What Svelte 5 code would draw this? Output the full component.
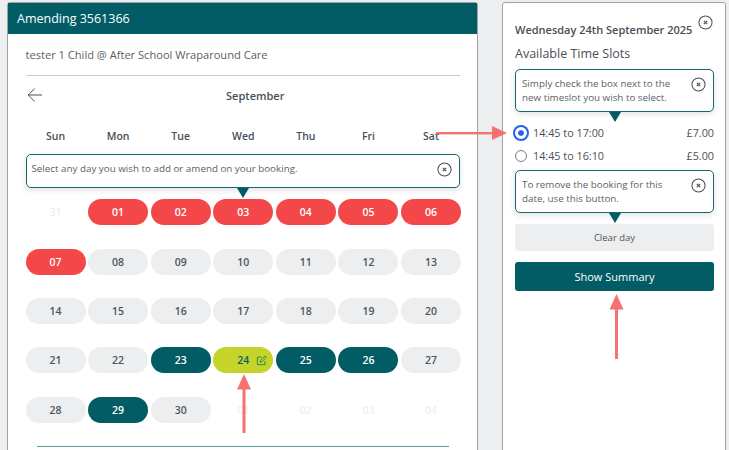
<script>
  const weekdays = ['Sun', 'Mon', 'Tue', 'Wed', 'Thu', 'Fri', 'Sat'];
  const pad = (n) => String(n).padStart(2, '0');

  const booked = [23, 25, 26, 29];
  const days = [{ label: '31', kind: 'off' }];
  for (let d = 1; d <= 30; d++) {
    let kind = 'free';
    if (d <= 7) kind = 'closed';
    if (booked.includes(d)) kind = 'booked';
    if (d === 24) kind = 'selected';
    days.push({ label: pad(d), kind });
  }
  for (let d = 1; d <= 4; d++) days.push({ label: pad(d), kind: 'off' });

  let slot = '1700';
</script>

{#snippet closeIcon()}
  <svg class="close" viewBox="0 0 16 16" width="15" height="15">
    <circle cx="8" cy="8" r="7" fill="none" stroke="#4a4f55" stroke-width="1.1" />
    <path d="M6.2 6.2l3.6 3.6M9.8 6.2l-3.6 3.6" stroke="#4a4f55" stroke-width="1.3" />
  </svg>
{/snippet}

<div class="page">
  <section class="card left">
    <header>Amending 3561366</header>
    <div class="body">
      <p class="title">tester 1 Child @ After School Wraparound Care</p>
      <div class="month">
        <svg class="back" viewBox="0 0 16 16" width="16" height="16">
          <path d="M15 8H1.2M7.6 1.6L1.2 8l6.4 6.4" fill="none" stroke="#4a4f55" stroke-width="1" />
        </svg>
        <span>September</span>
      </div>
      <div class="weekdays">
        {#each weekdays as w}
          <span>{w}</span>
        {/each}
      </div>
      <div class="tip tip-wide">
        <span>Select any day you wish to add or amend on your booking.</span>
        {@render closeIcon()}
      </div>
      <div class="grid">
        {#each days as day}
          <div class="day {day.kind}">
            {day.label}
            {#if day.kind === 'selected'}
              <svg class="edit" viewBox="0 0 16 16" width="11" height="11">
                <path d="M13 9v5H2V3h6" fill="none" stroke="#1f7a5c" stroke-width="1.3" />
                <path d="M6 10.4l.6-2.6L13 1.4l2 2-6.4 6.4z" fill="none" stroke="#1f7a5c" stroke-width="1.3" />
              </svg>
            {/if}
          </div>
        {/each}
      </div>
      <hr />
    </div>
  </section>

  <section class="card right">
    <div class="date-row">
      <strong>Wednesday 24th September 2025</strong>
      {@render closeIcon()}
    </div>
    <h2>Available Time Slots</h2>
    <div class="tip tip-slots">
      <span>Simply check the box next to the new timeslot you wish to select.</span>
      {@render closeIcon()}
    </div>
    <label class="slot first">
      <input type="radio" name="slot" value="1700" bind:group={slot} />
      <span>14:45 to 17:00</span>
      <em>£7.00</em>
    </label>
    <label class="slot">
      <input type="radio" name="slot" value="1610" bind:group={slot} />
      <span>14:45 to 16:10</span>
      <em>£5.00</em>
    </label>
    <div class="tip tip-clear">
      <span>To remove the booking for this date, use this button.</span>
      {@render closeIcon()}
    </div>
    <button class="clear">Clear day</button>
    <button class="summary">Show Summary</button>
  </section>

  <!-- annotation arrows drawn on top of the screenshot -->
  <svg class="arrows" viewBox="0 0 729 450" width="729" height="450">
    <g fill="#f87171" stroke="none">
      <rect x="436" y="132" width="58" height="2.4" />
      <path d="M507 133l-15 -7v14z" />
      <rect x="242.5" y="386" width="3" height="47" />
      <path d="M244 374l-7 15.5h14z" />
      <rect x="615" y="307" width="3" height="52" />
      <path d="M616.500 294l-7 15.500h14z" />
    </g>
  </svg>
</div>

<style>
  :global(body) {
    margin: 0;
    background: #eceef0;
    overflow: hidden;
  }

  .page {
    position: relative;
    display: flex;
    align-items: flex-start;
    gap: 24px;
    width: 729px;
    height: 450px;
    padding: 2px 0 0 7px;
    box-sizing: border-box;
    overflow: hidden;
    font-family: "Open Sans", "Noto Sans", sans-serif;
    color: #4a4f55;
  }

  .card {
    box-sizing: border-box;
    height: 470px;
    background: #fff;
    border: 1px solid #9fa3a8;
    border-radius: 3px 3px 0 0;
  }

  .left {
    width: 471px;
    flex: none;
  }

  .left header {
    height: 31px;
    line-height: 31px;
    padding-left: 9px;
    background: #015c66;
    color: #fff;
    font-size: 12.5px;
  }

  .body {
    position: relative;
    padding: 0 17px 0 17.5px;
  }

  .title {
    margin: 0;
    height: 41px;
    line-height: 41px;
    font-size: 11.1px;
    border-bottom: 1px solid #bcd0d2;
    color: #5a5f64;
  }

  .month {
    position: relative;
    height: 39px;
    display: flex;
    align-items: center;
    justify-content: center;
    padding-left: 25px;
    font-size: 11px;
    font-weight: 600;
  }

  .back {
    position: absolute;
    left: 1px;
    top: 11px;
  }

  .weekdays {
    display: grid;
    grid-template-columns: repeat(7, 60px);
    column-gap: 2.6px;
    margin-top: 14px;
    text-align: center;
    font-size: 10.5px;
    font-weight: 600;
    line-height: 14px;
    height: 14px;
  }

  .tip {
    position: absolute;
    box-sizing: border-box;
    display: flex;
    justify-content: space-between;
    background: #fff;
    border: 1px solid #15686f;
    border-radius: 5px;
    box-shadow: 0 2px 6px rgba(0, 0, 0, 0.12);
    font-size: 9.8px;
    line-height: 14.3px;
    color: #5a5f64;
    z-index: 1;
  }

  .tip::after {
    content: "";
    position: absolute;
    left: 50%;
    bottom: -11px;
    margin-left: -5.5px;
    border-left: 6.5px solid transparent;
    border-right: 6.5px solid transparent;
    border-top: 10px solid #015c66;
  }

  .tip-wide {
    left: 17.5px;
    right: 17px;
    top: 120px;
    height: 34px;
    align-items: center;
    padding: 0 7px 3px 5px;
  }

  .tip-slots {
    left: 12px;
    top: 66px;
    width: 199px;
    height: 43px;
    padding: 7px 7px 0 6px;
  }

  .tip-clear {
    left: 12px;
    top: 167px;
    width: 199px;
    height: 43px;
    padding: 7px 7px 0 6px;
  }

  .tip-slots span,
  .tip-clear span {
    width: 165px;
  }

  .grid {
    display: grid;
    grid-template-columns: repeat(7, 60px);
    column-gap: 2.6px;
    row-gap: 23.4px;
    margin-top: 56.3px;
  }

  .day {
    display: flex;
    align-items: center;
    justify-content: center;
    position: relative;
    height: 26px;
    border-radius: 13px;
    font-size: 10.5px;
    font-weight: 600;
  }

  .free {
    background: #eceef0;
    color: #4f545a;
  }

  .closed {
    background: #f44749;
    color: #fff;
  }

  .booked {
    background: #015c66;
    color: #fff;
  }

  .selected {
    background: #c6d42a;
    color: #015c66;
  }

  .off {
    color: #eef0f1;
  }

  .edit {
    position: absolute;
    right: 6px;
    top: 8px;
  }

  hr {
    margin: 23px 11.5px 0;
    border: none;
    border-top: 1px solid #5b9ca3;
  }

  .right {
    position: relative;
    width: 224px;
    flex: none;
    padding: 0 11px 0 12px;
  }

  .date-row {
    height: 39px;
    display: flex;
    align-items: flex-start;
    justify-content: space-between;
    font-size: 11px;
    white-space: nowrap;
  }

  .date-row strong {
    font-weight: 600;
    margin-top: 20px;
    line-height: 14px;
  }

  .date-row .close {
    margin: 12px 1px 0 0;
    flex: none;
  }

  h2 {
    margin: 0;
    height: 25px;
    font-size: 12.5px;
    font-weight: 400;
    line-height: 24px;
  }

  .slot {
    display: flex;
    align-items: center;
    height: 23px;
    font-size: 10.8px;
  }

  .slot.first {
    margin-top: 54px;
  }

  .slot input {
    appearance: none;
    box-sizing: border-box;
    flex: none;
    width: 12px;
    height: 12px;
    margin: 0 6px 0 0;
    border: 1px solid #767b80;
    border-radius: 50%;
    background: #fff;
  }

  .slot input:checked {
    border: 3px solid #fff;
    background: #2563eb;
    background-clip: padding-box;
    box-shadow: 0 0 0 2px #2563eb;
  }

  .slot em {
    margin-left: auto;
    font-style: normal;
  }

  button {
    display: block;
    width: 100%;
    border: none;
    border-radius: 3px;
    font-family: inherit;
  }

  .clear {
    margin-top: 57px;
    height: 27px;
    background: #eceef0;
    color: #4f545a;
    font-size: 9.5px;
  }

  .summary {
    margin-top: 11px;
    height: 29px;
    background: #015c66;
    color: #fff;
    font-size: 11px;
  }

  .arrows {
    position: absolute;
    left: 0;
    top: 0;
    pointer-events: none;
    z-index: 2;
  }
</style>
